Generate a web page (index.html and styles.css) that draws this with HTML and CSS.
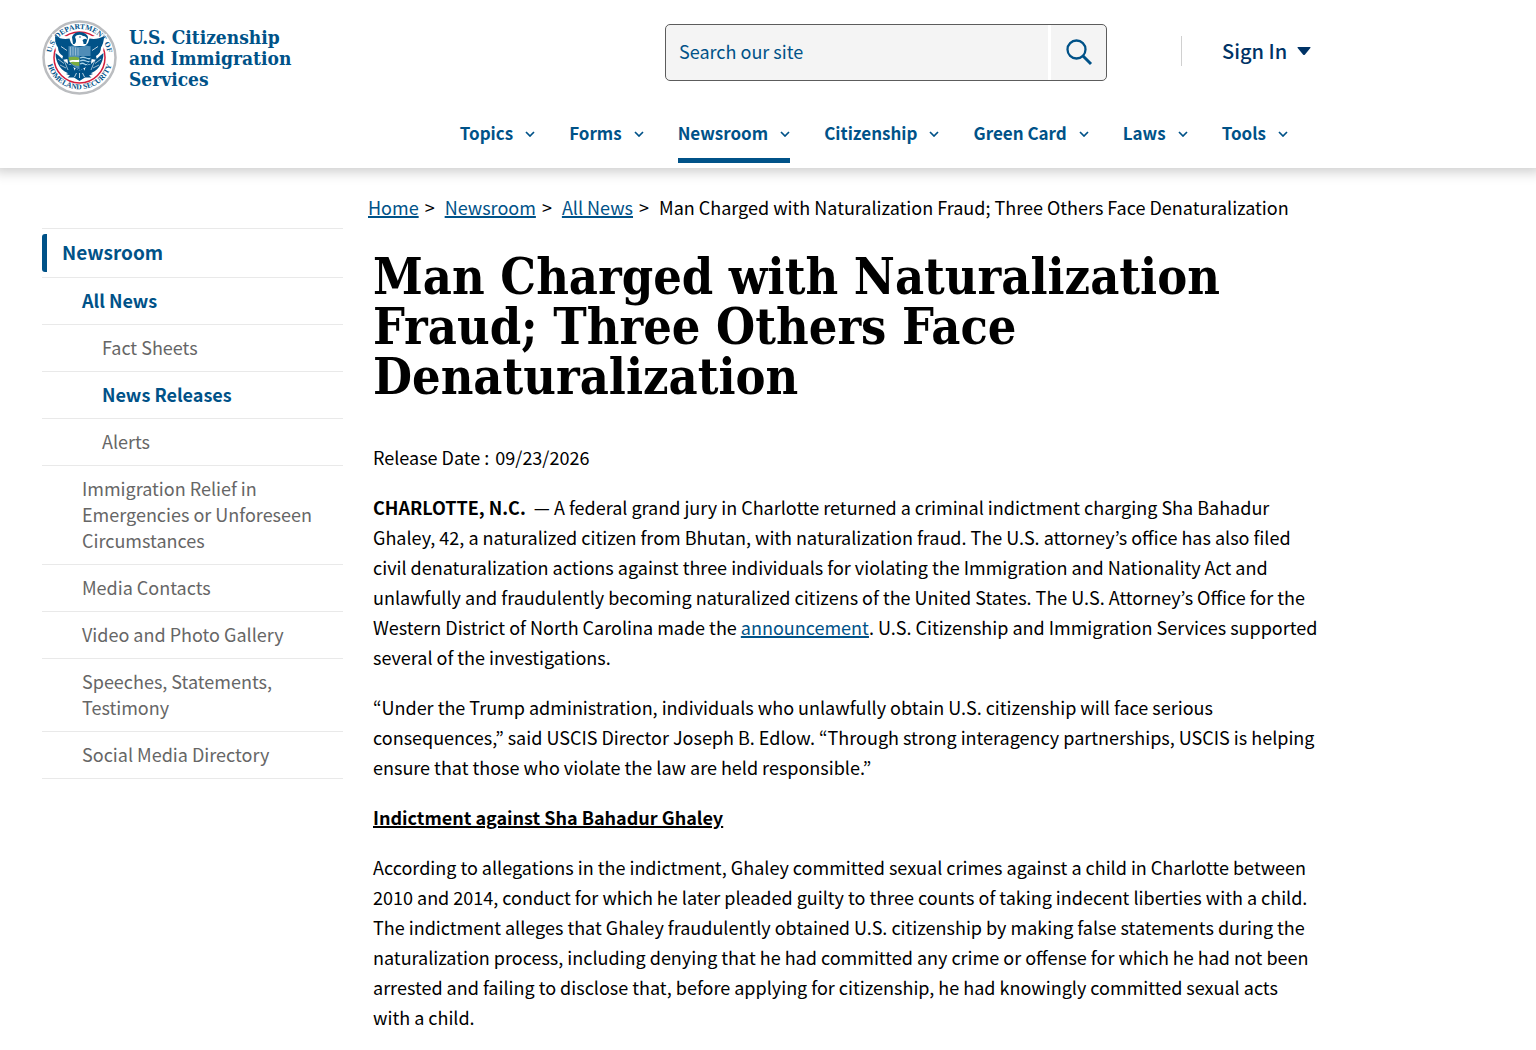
FILE: index.html
```html
<!DOCTYPE html>
<html lang="en">
<head>
  <meta charset="UTF-8" />
  <meta name="viewport" content="width=device-width, initial-scale=1" />
  <title>Man Charged with Naturalization Fraud; Three Others Face Denaturalization | USCIS</title>
  <link rel="stylesheet" href="styles.css">
</head>
<body>
  <svg width="0" height="0" class="sprite" aria-hidden="true">
    <symbol id="chevron" viewBox="0 0 10 6">
      <path d="M1 1l4 4 4-4" fill="none" stroke="currentColor" stroke-width="1.7" />
    </symbol>
  </svg>

  <header class="site-header">
    <div class="header-inner">
      <div class="header-top">
        <a class="logo" href="#">
          <svg class="seal" viewBox="0 0 150 150" aria-hidden="true">
            <defs>
              <path id="sealTop" d="M20 90 A57 57 0 1 1 130 90" />
              <path id="sealBottom" d="M9 80 A66.500 66.500 0 0 0 141 80" />
            </defs>
            <circle cx="75" cy="75" r="72" fill="#fff" stroke="#bbbdc0" stroke-width="5" />
            <circle cx="75" cy="75" r="51" fill="#fff" stroke="#d31f3c" stroke-width="3" />
            <!-- wings -->
            <path fill="#fff" d="M20 28 L58 34 L92 34 L130 28 L122 62 L100 80 H50 L28 62Z" />
            <path fill="#005288" d="M26 32 C35 38 47 39 55 37 L58 46 L64 52 L86 52 L92 46 L95 37 C103 39 115 38 124 32 C124 43 121 50 118 55 C118 63 114 69 108 72 L110 80 L99 78 L98 88 L52 88 L51 78 L40 80 L42 72 C36 69 32 63 32 55 C28 50 26 43 26 32Z" />
            <path fill="none" stroke="#fff" stroke-width="1.500" d="M38 53 L50 61 M112 53 L100 61" />
            <!-- head -->
            <path fill="#005288" d="M60 34 C63 25 73 22 82 25 C88 27 92 31 92 35 L88 48 L62 48Z" />
            <path fill="#fff" d="M66 34 C69 29 77 28 82 32 C87 32 90 35 90 39 C86 36 83 38 81 41 C83 45 84 47 82 49 C77 52 70 51 65 48 C69 45 69 40 66 34Z" />
            <circle cx="76" cy="34" r="1.500" fill="#005288" />
            <!-- branch and arrows -->
            <path fill="#005288" d="M27 66 C36 72 42 80 52 88 L62 91 L66 104 L56 108 C40 103 27 88 27 66Z" />
            <path fill="#005288" d="M123 66 C114 72 108 80 98 88 L88 91 L84 104 L94 108 C110 103 123 88 123 66Z" />
            <path fill="none" stroke="#fff" stroke-width="1.200" d="M32 78 L44 87 M36 90 L48 96 M44 80 L52 100 M118 78 L106 87 M114 90 L102 96 M106 80 L98 100" />
            <path fill="#005288" d="M48 108 C59 103 64 105 67 97 L75 101 L83 97 C86 105 91 103 102 108 L94 111 L99 115 L86 115 L75 122 L64 115 L51 115 L56 111Z" />
            <path fill="none" stroke="#fff" stroke-width="1.500" d="M69 106 L65 114 M81 106 L85 114 M75 106 V116" />
            <!-- shield -->
            <path fill="#4f8db7" d="M52 53 L62 51 L75 54 L88 51 L98 53 L98 75 C98 86 88 94 75 100 C62 94 52 86 52 75Z" />
            <path fill="none" stroke="#d9e7f1" stroke-width="1" d="M57 54 V71 M62 54 V71 M67 55 V71 M72 56 V71" />
            <path fill="#7cad3f" d="M52 75 C60 73 68 72 75 76 V92 C64 92 56 86 53 80Z" />
            <path fill="#fff" d="M54 82 C61 78 68 82 75 79 V84 C67 85 62 82 55 85Z" />
            <path fill="#005288" d="M75 72 H98 V76 C98 87 88 94 75 100Z" />
            <path fill="none" stroke="#a9d3e8" stroke-width="2.500" d="M76 76 Q82 73 88 76 T98 76 M76 82 Q82 79 88 82 T97 82 M76 88 Q81 85 85 88 T92 88" />
            <path fill="none" stroke="#005288" stroke-width="2" d="M52 53 V75 C52 86 62 94 75 100 C88 94 98 86 98 75 V53" />
            <text class="seal-text"><textPath href="#sealTop" startOffset="50%" text-anchor="middle">U.S. DEPARTMENT OF</textPath></text>
            <text class="seal-text"><textPath href="#sealBottom" startOffset="50%" text-anchor="middle">HOMELAND SECURITY</textPath></text>
          </svg>
          <span class="logo-text">U.S. Citizenship<br>and Immigration<br>Services</span>
        </a>

        <form class="search" role="search">
          <input type="search" class="search-input" placeholder="Search our site" aria-label="Search our site" />
          <button type="submit" class="search-button" aria-label="Search">
            <svg width="28" height="28" viewBox="0 0 28 28" fill="none" stroke="currentColor" stroke-width="2.300">
              <circle cx="11.500" cy="11.500" r="9" />
              <path d="M18 18l8 8" stroke-width="3" />
            </svg>
          </button>
        </form>

        <div class="account">
          <button type="button" class="sign-in">Sign In
            <svg width="14" height="8" viewBox="0 0 14 8" aria-hidden="true"><path d="M1 0h12q1 0 .3 1L8 7.400q-1 1-2 0L.7 1Q0 0 1 0z" fill="currentColor" /></svg>
          </button>
        </div>
      </div>

      <nav class="main-nav" aria-label="Main">
        <button type="button" class="nav-item">Topics <svg class="chevron"><use href="#chevron" /></svg></button>
        <button type="button" class="nav-item">Forms <svg class="chevron"><use href="#chevron" /></svg></button>
        <button type="button" class="nav-item active">Newsroom <svg class="chevron"><use href="#chevron" /></svg></button>
        <button type="button" class="nav-item">Citizenship <svg class="chevron"><use href="#chevron" /></svg></button>
        <button type="button" class="nav-item">Green Card <svg class="chevron"><use href="#chevron" /></svg></button>
        <button type="button" class="nav-item">Laws <svg class="chevron"><use href="#chevron" /></svg></button>
        <button type="button" class="nav-item">Tools <svg class="chevron"><use href="#chevron" /></svg></button>
      </nav>
    </div>
  </header>

  <div class="page">
    <nav class="sidebar" aria-label="Newsroom">
      <ul>
        <li class="section"><a href="#">Newsroom</a></li>
        <li class="level-1 current"><a href="#">All News</a></li>
        <li class="level-2"><a href="#">Fact Sheets</a></li>
        <li class="level-2 current"><a href="#">News Releases</a></li>
        <li class="level-2"><a href="#">Alerts</a></li>
        <li class="level-1"><a href="#">Immigration Relief in Emergencies or Unforeseen Circumstances</a></li>
        <li class="level-1"><a href="#">Media Contacts</a></li>
        <li class="level-1"><a href="#">Video and Photo Gallery</a></li>
        <li class="level-1"><a href="#">Speeches, Statements, Testimony</a></li>
        <li class="level-1"><a href="#">Social Media Directory</a></li>
      </ul>
    </nav>

    <main class="content">
      <nav aria-label="Breadcrumb">
        <ol class="breadcrumb">
          <li><a href="#">Home</a></li>
          <li><a href="#">Newsroom</a></li>
          <li><a href="#">All News</a></li>
          <li>Man Charged with Naturalization Fraud; Three Others Face Denaturalization</li>
        </ol>
      </nav>

      <article class="article">
        <h1>Man Charged with Naturalization Fraud; Three Others Face Denaturalization</h1>
        <div class="release-date"><span>Release Date :</span> <time datetime="2026-09-23">09/23/2026</time></div>

        <p><strong>CHARLOTTE, N.C.</strong>&nbsp; — A federal grand jury in Charlotte returned a criminal indictment charging Sha Bahadur Ghaley, 42, a naturalized citizen from Bhutan, with naturalization fraud. The U.S. attorney’s office has also filed civil denaturalization actions against three individuals for violating the Immigration and Nationality Act and unlawfully and fraudulently becoming naturalized citizens of the United States. The U.S. Attorney’s Office for the Western District of North Carolina made the <a href="#">announcement</a>. U.S. Citizenship and Immigration Services supported several of the investigations.</p>

        <p>“Under the Trump administration, individuals who unlawfully obtain U.S. citizenship will face serious consequences,” said USCIS Director Joseph B. Edlow. “Through strong interagency partnerships, USCIS is helping ensure that those who violate the law are held responsible.”</p>

        <h2>Indictment against Sha Bahadur Ghaley</h2>

        <p>According to allegations in the indictment, Ghaley committed sexual crimes against a child in Charlotte between 2010 and 2014, conduct for which he later pleaded guilty to three counts of taking indecent liberties with a child. The indictment alleges that Ghaley fraudulently obtained U.S. citizenship by making false statements during the naturalization process, including denying that he had committed any crime or offense for which he had not been arrested and failing to disclose that, before applying for citizenship, he had knowingly committed sexual acts with a child.</p>
      </article>
    </main>
  </div>
</body>
</html>
```
FILE: styles.css
```css
* {
  box-sizing: border-box;
}
body {
  margin: 0;
  font-family: "Noto Sans CJK KR", "Noto Sans", sans-serif;
  font-size: 18px;
  line-height: 30px;
  color: #000;
  background: #fff;
}
a {
  color: #005288;
}
button {
  font-family: inherit;
  background: none;
  border: none;
  padding: 0;
  cursor: pointer;
}
.sprite {
  position: absolute;
}

/* Header */
.site-header {
  background: #fff;
  box-shadow: 0 -2px 12px 6px rgba(0, 0, 0, 0.2);
}
.header-inner {
  max-width: 1358px;
  padding: 20px 42px 5px;
}
.header-top {
  display: flex;
  align-items: flex-start;
}
.logo {
  display: flex;
  flex: 1;
  gap: 12px;
  text-decoration: none;
}
.seal {
  width: 75px;
  height: 75px;
}
.seal-text {
  font-family: "Liberation Serif", serif;
  font-weight: bold;
  font-size: 15px;
  fill: #005288;
}
.logo-text {
  padding-top: 7px;
  font-family: "DejaVu Serif Condensed", "DejaVu Serif", serif;
  font-size: 19px;
  font-weight: bold;
  line-height: 21px;
}
.search {
  display: flex;
  flex: 0 1 442px;
  height: 57px;
  margin-top: 4px;
  border: 1px solid #5c5c5c;
  border-radius: 5px;
  background: #f4f4f4;
  overflow: hidden;
}
.search-input {
  flex: 1;
  min-width: 0;
  padding: 0 13px 4px;
  border: none;
  border-right: 3px solid #fff;
  background: none;
  font-family: inherit;
  font-size: 18px;
  color: #005288;
}
.search-input::placeholder {
  color: #005288;
  opacity: 1;
}
.search-button {
  display: flex;
  align-items: center;
  justify-content: center;
  width: 55px;
  padding-bottom: 2px;
  color: #005288;
}
.account {
  display: flex;
  flex: 0 0 135px;
  height: 30px;
  margin: 16px 0 0 74px;
  padding-left: 40px;
  border-left: 1px solid #d0d0d0;
}
.sign-in {
  display: flex;
  align-items: center;
  gap: 10px;
  font-size: 20px;
  font-weight: 500;
  line-height: 30px;
  color: #003366;
  white-space: nowrap;
}

/* Main menu */
.main-nav {
  display: flex;
  justify-content: flex-end;
  gap: 34px;
  margin-top: 10px;
  padding-right: 28px;
}
.nav-item {
  display: flex;
  align-items: center;
  gap: 12px;
  height: 58px;
  padding-top: 1px;
  border-bottom: 5px solid transparent;
  font-size: 17px;
  font-weight: bold;
  color: #005288;
  white-space: nowrap;
}
.nav-item.active {
  border-bottom-color: #005288;
}
.chevron {
  width: 10px;
  height: 6px;
  margin-top: 4px;
}

/* Page */
.page {
  display: grid;
  grid-template-columns: 301px minmax(0, 1fr);
  column-gap: 25px;
  max-width: 1360px;
  padding: 24px 42px 17px;
}
.sidebar ul {
  list-style: none;
  margin: 36px 0 0;
  padding: 0;
  border-top: 1px solid #e9e9e9;
}
.sidebar li {
  padding: 9px 20px 11px;
  border-bottom: 1px solid #e9e9e9;
  font-size: 18px;
  line-height: 26px;
}
.sidebar a {
  display: block;
  color: #666;
  text-decoration: none;
}
.sidebar .section {
  padding: 5px 0;
}
.sidebar .section a {
  padding: 5px 15px 7px;
  border-left: 5px solid #005288;
  border-radius: 3px;
  font-size: 19px;
  font-weight: bold;
  color: #005288;
}
.sidebar .level-1 {
  padding-left: 40px;
}
.sidebar .level-2 {
  padding-left: 60px;
}
.sidebar .current a {
  font-weight: bold;
  color: #005288;
}

.breadcrumb {
  display: flex;
  flex-wrap: wrap;
  list-style: none;
  margin: 0;
  padding: 0;
}
.breadcrumb li + li::before {
  content: ">";
  padding: 0 10px 0 6px;
}
.article {
  padding-left: 5px;
}
.article h1 {
  margin: 30px 0 40px;
  font-family: "DejaVu Serif Condensed", "DejaVu Serif", serif;
  font-size: 50px;
  font-weight: bold;
  line-height: 50px;
}
.release-date {
  display: flex;
  gap: 6px;
}
.article p {
  margin: 20px 0 0;
}
.article h2 {
  margin: 20px 0 0;
  font-size: 18px;
  font-weight: bold;
  line-height: 30px;
  text-decoration: underline;
}
.article a,
.article h2,
.breadcrumb a {
  text-decoration-thickness: 2px;
}
```
